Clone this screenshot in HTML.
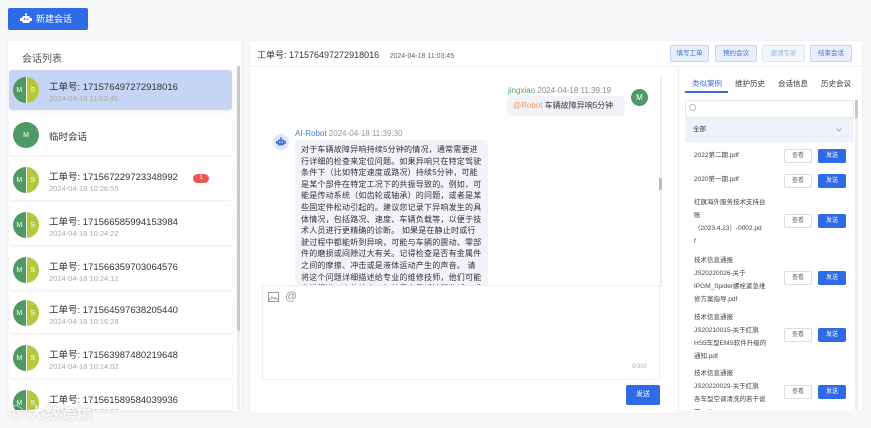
<!DOCTYPE html>
<html><head><meta charset="utf-8"><style>
*{box-sizing:border-box;margin:0;padding:0}
body{width:871px;height:428px;overflow:hidden;background:#f6f7f9;font-family:"Liberation Sans","Noto Sans CJK SC",sans-serif;color:#333;position:relative}
.abs{position:absolute}
.btnnew{left:8px;top:8px;width:80px;height:22px;background:#2f6be8;border-radius:2px;color:#fff;font-size:9px;line-height:22px;padding-left:28px}
.panel{background:#fff;border-radius:2px;box-shadow:0 0 3px rgba(0,0,0,.06)}
.item{position:absolute;left:9px;width:223px;height:40px;background:#fff;border-radius:3px;box-shadow:0 1px 3px rgba(0,0,0,.08)}
.item.sel{background:#c6d5f5}
.av{position:absolute;left:4px;top:7px;width:26px;height:26px;border-radius:50%;overflow:hidden;display:flex}
.av span{flex:1;color:#fff;font-size:7px;display:flex;align-items:center;justify-content:center}
.av .m{background:#4e9a62}.av .s{background:#b4c93a;border-left:1px solid #fff}
.t1{position:absolute;left:40px;top:9px;font-size:9.5px;color:#333}
.t2{position:absolute;left:40px;top:24px;font-size:7.5px;color:#aaa}
.hb{position:absolute;top:45px;height:17px;border:1px solid #c2d3f3;background:#e8effc;color:#3c6cd8;font-size:6.5px;line-height:15px;text-align:center;border-radius:2px}
.row{position:absolute;left:694px;font-size:6.5px;color:#444;line-height:13px;width:95px}
.bv{position:absolute;left:784px;width:28px;height:14px;border:1px solid #ddd;background:#fff;font-size:6px;color:#666;text-align:center;line-height:12px;border-radius:2px}
.bs{position:absolute;left:818px;width:28px;height:14px;background:#2f6be8;font-size:6px;color:#fff;text-align:center;line-height:14px;border-radius:2px}
</style></head><body>
<div class="abs btnnew"><svg class="abs" style="left:12px;top:5px" width="12" height="12" viewBox="0 0 12 12"><circle cx="6" cy="1.5" r="1.2" fill="#fff"/><rect x="2" y="3" width="8" height="7" rx="2" fill="#fff"/><rect x="0" y="5" width="2" height="3" fill="#fff"/><rect x="10" y="5" width="2" height="3" fill="#fff"/><circle cx="4.5" cy="6" r="0.9" fill="#2f6be8"/><circle cx="7.5" cy="6" r="0.9" fill="#2f6be8"/></svg>新建会话</div>

<div class="abs panel" style="left:8px;top:41px;width:233px;height:370px"></div>
<div class="abs" style="left:22px;top:50px;font-size:10px;color:#555">会话列表</div>
<div class="abs" style="left:237px;top:66px;width:3px;height:344px;background:#eee"></div>
<div class="abs" style="left:237px;top:66px;width:3px;height:265px;background:#c8c8c8;border-radius:2px"></div>

<div class="item sel" style="top:70px"><div class="av"><span class="m">M</span><span class="s">S</span></div><div class="t1">工单号: 171576497272918016</div><div class="t2">2024-04-18 11:03:45</div></div>
<div class="item" style="top:115px"><div class="av"><span class="m">M</span></div><div class="t1" style="top:14px">临时会话</div></div>
<div class="item" style="top:160px"><div class="av"><span class="m">M</span><span class="s">S</span></div><div class="t1">工单号: 171567229723348992</div><div class="t2">2024-04-18 10:26:55</div><div class="abs" style="left:184px;top:14px;width:16px;height:9px;background:#f05555;border-radius:5px;color:#fff;font-size:6px;text-align:center;line-height:9px">1</div></div>
<div class="item" style="top:205px"><div class="av"><span class="m">M</span><span class="s">S</span></div><div class="t1">工单号: 171566585994153984</div><div class="t2">2024-04-18 10:24:22</div></div>
<div class="item" style="top:250px"><div class="av"><span class="m">M</span><span class="s">S</span></div><div class="t1">工单号: 171566359703064576</div><div class="t2">2024-04-18 10:24:12</div></div>
<div class="item" style="top:293px"><div class="av"><span class="m">M</span><span class="s">S</span></div><div class="t1">工单号: 171564597638205440</div><div class="t2">2024-04-18 10:16:28</div></div>
<div class="item" style="top:338px"><div class="av"><span class="m">M</span><span class="s">S</span></div><div class="t1">工单号: 171563987480219648</div><div class="t2">2024-04-18 10:14:02</div></div>
<div class="item" style="top:383px;height:27px;overflow:hidden"><div class="av"><span class="m">M</span><span class="s">S</span></div><div class="t1">工单号: 171561589584039936</div><div class="t2">2024-04-18 10:06:30</div></div>
<div class="abs" style="left:8px;top:400px;font-size:16px;color:rgba(255,255,255,.85);font-weight:bold;text-shadow:0 0 2px rgba(0,0,0,.2)">ⓒ 大数跨境</div>

<div class="abs panel" style="left:250px;top:41px;width:612px;height:372px"></div>
<div class="abs" style="left:250px;top:66px;width:612px;height:1px;background:#eee"></div>
<div class="abs" style="left:257px;top:48px;font-size:9px;color:#333">工单号: 171576497272918016 <span style="font-size:7px;color:#666;margin-left:8px">2024-04-18 11:03:45</span></div>
<div class="hb" style="left:670px;width:39px">填写工单</div>
<div class="hb" style="left:715px;width:42px">预约会议</div>
<div class="hb" style="left:762px;width:43px;color:#9fb6e6;border-color:#dbe5f7;background:#f1f5fd">邀请专家</div>
<div class="hb" style="left:810px;width:42px">结束会话</div>

<div class="abs" style="left:660px;top:77px;width:2px;height:210px;background:#eee"></div>
<div class="abs" style="left:659px;top:178px;width:3px;height:12px;background:#bbb"></div>

<div class="abs" style="left:508px;top:86px;font-size:8px;color:#888"><span style="color:#57a36a">jingxiao</span> 2024-04-18 11:39:19</div>
<div class="abs" style="left:631px;top:89px;width:17px;height:17px;border-radius:50%;background:#4e9a62;color:#fff;font-size:8px;text-align:center;line-height:17px">M</div>
<div class="abs" style="left:507px;top:96px;width:118px;height:20px;background:#f1f3f8;border-radius:5px;font-size:8px;line-height:20px;padding-left:6px;color:#333"><span style="color:#ef9a5c">@Robot</span> 车辆故障异响5分钟</div>

<div class="abs" style="left:273px;top:134px;width:16px;height:16px;border-radius:50%;background:#dde6fb"></div>
<svg class="abs" style="left:276px;top:137px" width="10" height="10" viewBox="0 0 12 12"><circle cx="6" cy="1.5" r="1.2" fill="#3c6cd8"/><rect x="2" y="3" width="8" height="7" rx="2" fill="#3c6cd8"/><rect x="0" y="5" width="2" height="3" fill="#3c6cd8"/><rect x="10" y="5" width="2" height="3" fill="#3c6cd8"/><circle cx="4.5" cy="6" r="0.9" fill="#fff"/><circle cx="7.5" cy="6" r="0.9" fill="#fff"/></svg>
<div class="abs" style="left:295px;top:129px;font-size:8px;color:#999"><span style="color:#4a78d8">AI-Robot</span> 2024-04-18 11:39:30</div>
<div class="abs" style="left:295px;top:140px;width:193px;height:146px;background:#f1f3f8;border-radius:5px;overflow:hidden;padding:4px 5px 0 6px;font-size:8px;letter-spacing:.2px;line-height:11.6px;color:#333">对于车辆故障异响持续5分钟的情况，通常需要进行详细的检查来定位问题。如果异响只在特定驾驶条件下（比如特定速度或路况）持续5分钟，可能是某个部件在特定工况下的共振导致的。例如，可能是传动系统（如齿轮或轴承）的问题，或者是某些固定件松动引起的。建议您记录下异响发生的具体情况，包括路况、速度、车辆负载等，以便于技术人员进行更精确的诊断。 如果是在静止时或行驶过程中都能听到异响，可能与车辆的震动、零部件的磨损或间隙过大有关。记得检查是否有金属件之间的摩擦、冲击或是液体运动产生的声音。 请将这个问题详细描述给专业的维修技师，他们可能会进行进一步的检查，如使用电子听诊器监听，或者通</div>

<div class="abs" style="left:262px;top:285px;width:398px;height:95px;background:#fff;border:1px solid #eee;border-radius:2px"></div>
<svg class="abs" style="left:268px;top:292px" width="11" height="10" viewBox="0 0 11 10"><rect x=".5" y=".5" width="10" height="9" fill="none" stroke="#999"/><path d="M1 8l3-3 2 2 1.5-1.5L10 8" fill="none" stroke="#999"/></svg>
<div class="abs" style="left:285px;top:289px;font-size:12px;color:#999">@</div>
<div class="abs" style="left:632px;top:364px;font-size:6px;color:#aaa">0/300</div>
<div class="abs" style="left:626px;top:385px;width:34px;height:20px;background:#2f6be8;border-radius:2px;color:#fff;font-size:7px;text-align:center;line-height:20px">发送</div>

<div class="abs" style="left:678px;top:68px;width:184px;height:343px;background:#fff;border-left:1px solid #eee"></div>
<div class="abs" style="left:692px;top:78px;font-size:7.5px;color:#3c6cd8">类似案例</div>
<div class="abs" style="left:735px;top:78px;font-size:7.5px;color:#333">维护历史</div>
<div class="abs" style="left:778px;top:78px;font-size:7.5px;color:#333">会话信息</div>
<div class="abs" style="left:821px;top:78px;font-size:7.5px;color:#333">历史会议</div>
<div class="abs" style="left:685px;top:91px;width:43px;height:1.5px;background:#3c6cd8"></div>
<div class="abs" style="left:855px;top:100px;width:3px;height:310px;background:#eee"></div>
<div class="abs" style="left:855px;top:100px;width:3px;height:18px;background:#c8c8c8"></div>
<div class="abs" style="left:685px;top:100px;width:169px;height:18px;border:1px solid #e6e6e6;border-radius:2px;background:#fff"></div>
<div class="abs" style="left:689px;top:104px;width:7px;height:7px;border:1px solid #bbb;border-radius:50%"></div>
<div class="abs" style="left:685px;top:118px;width:169px;height:24px;background:#eef3fb;font-size:6.5px;line-height:24px;padding-left:8px;color:#333">全部</div>
<svg class="abs" style="left:836px;top:128px" width="6" height="4" viewBox="0 0 6 4"><path d="M.5 .5L3 3 5.5 .5" fill="none" stroke="#999" stroke-width=".8"/></svg>

<div class="row" style="top:149px">2022第二期.pdf</div><div class="bv" style="top:149px">查看</div><div class="bs" style="top:149px">发送</div>
<div class="row" style="top:173px">2020第一期.pdf</div><div class="bv" style="top:174px">查看</div><div class="bs" style="top:174px">发送</div>
<div class="row" style="top:196px">红旗海外服务技术支持台<br>账<br>（2023.4.23）-0002.pd<br>f</div><div class="bv" style="top:214px">查看</div><div class="bs" style="top:214px">发送</div>
<div class="row" style="top:254px">技术信息通报<br>JS20220026-关于<br>IPGM_Spider螺栓紧急维<br>修方案指导.pdf</div><div class="bv" style="top:271px">查看</div><div class="bs" style="top:271px">发送</div>
<div class="row" style="top:311px">技术信息通报<br>JS20210015-关于红旗<br>HS5车型EMS软件升级的<br>通知.pdf</div><div class="bv" style="top:328px">查看</div><div class="bs" style="top:328px">发送</div>
<div class="row" style="top:367px;height:43px;overflow:hidden">技术信息通报<br>JS20220029-关于红旗<br>各车型空调清洗的若干说<br>明.pdf</div><div class="bv" style="top:385px">查看</div><div class="bs" style="top:385px">发送</div>
<div class="abs" style="left:678px;top:411px;width:184px;height:17px;background:#f6f7f9"></div>
</body></html>
